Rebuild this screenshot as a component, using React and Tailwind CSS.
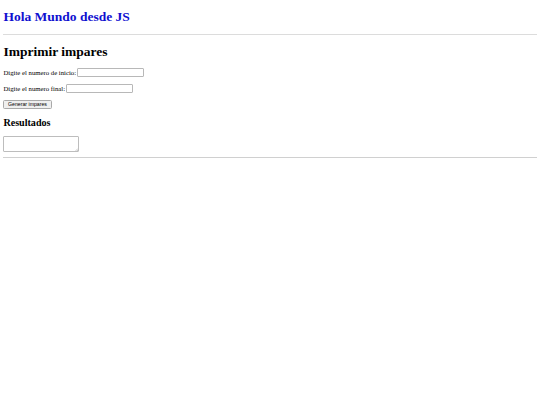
import React from 'react';

const serif = { fontFamily: '"Liberation Serif", "Times New Roman", serif' };

export default function App() {
  return (
    <div className="min-h-[405px] bg-white px-[3.4px] text-black" style={serif}>
      <h1 className="mt-[9px] mb-[9px] text-[13.5px] leading-[15.5px] font-bold text-[#1010d0]">
        Hola Mundo desde JS
      </h1>
      <hr className="border-0 h-[1px] bg-[#dcdcdc]" />

      <h1 className="mt-[9px] mb-[9px] text-[13.5px] leading-[15.5px] font-bold">
        Imprimir impares
      </h1>

      <p className="my-[6.75px] text-[6.75px] leading-[9.3px] flex items-center">
        <label htmlFor="inicio">Digite el numero de inicio:</label>
        <input
          id="inicio"
          type="text"
          className="ml-[1px] w-[67px] h-[9px] border border-[#b8b8b8] rounded-[1px] bg-white"
        />
      </p>
      <p className="my-[6.75px] text-[6.75px] leading-[9.3px] flex items-center">
        <label htmlFor="final">Digite el numero final:</label>
        <input
          id="final"
          type="text"
          className="ml-[1px] w-[67px] h-[9px] border border-[#b8b8b8] rounded-[1px] bg-white"
        />
      </p>
      <p className="my-[6.75px] text-[6.75px] leading-[9.3px] flex items-center">
        <button
          type="button"
          className="h-[9px] w-[49px] -ml-[0.4px] border border-[#a9a9a9] rounded-[1.5px] bg-[#efefef] text-[5.2px] leading-none text-black"
          style={{ fontFamily: '"Liberation Sans", Arial, sans-serif' }}
        >
          Generar impares
        </button>
      </p>

      <h2 className="mt-[8.4px] mb-[6.5px] text-[10.1px] leading-[11.6px] font-bold">
        Resultados
      </h2>
      <div className="h-[18px]">
        <div className="relative w-[76px] h-[16px]">
          <textarea className="block w-full h-full border border-[#bdbdbd] rounded-[1px] bg-white text-[6px] resize-none" />
          <svg className="absolute right-[1px] bottom-[1px]" width="3" height="3" viewBox="0 0 3 3">
            <path d="M3 0.5 L0.5 3 M3 2 L2 3" stroke="#9a9a9a" strokeWidth="0.5" />
          </svg>
        </div>
      </div>
      <hr className="mt-[3px] border-0 h-[1px] bg-[#d0d0d0]" />
    </div>
  );
}
